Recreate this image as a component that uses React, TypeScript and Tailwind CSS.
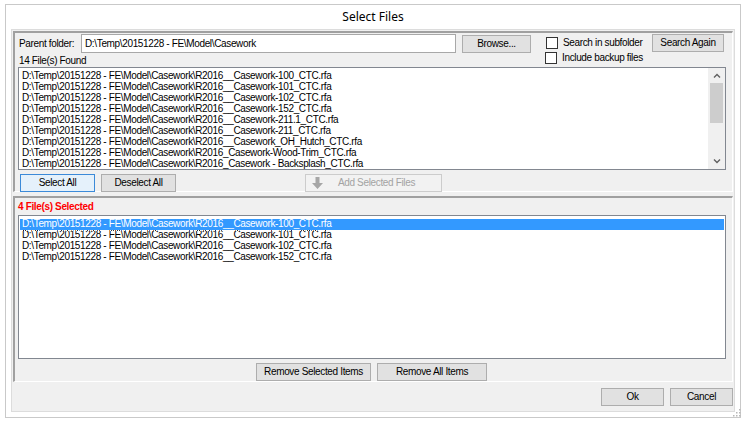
import React from "react";

const BASE = "D:\\Temp\\20151228 - FE\\Model\\Casework\\";

const FOUND = [
  "R2016__Casework-100_CTC.rfa",
  "R2016__Casework-101_CTC.rfa",
  "R2016__Casework-102_CTC.rfa",
  "R2016__Casework-152_CTC.rfa",
  "R2016__Casework-211.1_CTC.rfa",
  "R2016__Casework-211_CTC.rfa",
  "R2016__Casework_OH_Hutch_CTC.rfa",
  "R2016_Casework-Wood-Trim_CTC.rfa",
  "R2016_Casework - Backsplash_CTC.rfa",
].map((f) => BASE + f);

const SELECTED = [
  "R2016__Casework-100_CTC.rfa",
  "R2016__Casework-101_CTC.rfa",
  "R2016__Casework-102_CTC.rfa",
  "R2016__Casework-152_CTC.rfa",
].map((f) => BASE + f);

const FONT = { fontFamily: '"Liberation Sans", Arial, sans-serif' };

// WinForms 8.25pt sans is narrower than Arial at the same height
const TXT = "whitespace-nowrap text-[10px] leading-none tracking-[-0.35px]";

function Btn({
  children, w, primary, disabled,
}: { children: React.ReactNode; w: string; primary?: boolean; disabled?: boolean }) {
  const tone = disabled
    ? "border-[#cccccc] bg-[#f2f2f2] text-[#a3a3a3]"
    : primary
      ? "border-[#3c8ad8] bg-[#e5f1fb] text-black"
      : "border-[#adadad] bg-[#e1e1e1] text-black";
  return (
    <div className={`${w} ${TXT} flex h-[18px] shrink-0 items-center justify-center border ${tone}`}>
      {children}
    </div>
  );
}

function Check({ label }: { label: string }) {
  return (
    <div className={`${TXT} flex h-[14px] items-center gap-[5px] text-black`}>
      <span className="h-[12px] w-[12px] shrink-0 border border-[#333333] bg-white" />
      <span>{label}</span>
    </div>
  );
}

function Chevron({ up }: { up?: boolean }) {
  return (
    <svg width="8" height="5" viewBox="0 0 8 5" className={up ? "" : "rotate-180"}>
      <path d="M1 4.5 L4 1.5 L7 4.5" fill="none" stroke="#606060" strokeWidth="1.4" />
    </svg>
  );
}

export default function App() {
  return (
    <div className="relative h-[425px] w-[746px] overflow-hidden bg-white pl-[5px] pt-[4px]" style={FONT}>
      <div className="flex h-[414px] w-[736px] flex-col border border-[#c9c9c9]">
        {/* title bar */}
        <div
          className="flex h-[24px] shrink-0 items-center justify-center text-[12px] text-black"
          style={{ fontFamily: '"Noto Sans", "Open Sans", sans-serif' }}
        >
          Select Files
        </div>

        {/* client area */}
        <div className="mx-[5px] mb-[5px] flex flex-1 flex-col border border-[#dcdcdc] bg-[#f0f0f0] p-[1px]">
          <div className="flex h-[351px] shrink-0 flex-col">
            {/* upper panel */}
            <div className="flex h-[161px] shrink-0 flex-col border-b border-l-2 border-r border-t-2 border-b-white border-l-[#a0a0a0] border-r-white border-t-[#a0a0a0]">
              <div className="flex h-[34px] shrink-0">
                <div className="flex flex-col pl-[4px] pt-[1px]">
                  <div className="flex h-[19px] items-center">
                    <span className={`${TXT} w-[62px] text-black`}>Parent folder:</span>
                    <div className={`${TXT} flex h-[19px] w-[375px] items-center border border-[#a8a8a8] bg-white px-[3px] text-black`}>
                      D:\Temp\20151228 - FE\Model\Casework
                    </div>
                    <div className="ml-[6px]">
                      <Btn w="w-[69px]">Browse...</Btn>
                    </div>
                  </div>
                  <div className={`${TXT} mt-[3px] text-black`}>14 File(s) Found</div>
                </div>
                <div className="ml-[14px] flex flex-col gap-[1px] pt-[3px]">
                  <div className="pl-[1px]"><Check label="Search in subfolder" /></div>
                  <Check label="Include backup files" />
                </div>
                <div className="ml-auto mr-[8px] pt-[1px]">
                  <Btn w="w-[72px]">Search Again</Btn>
                </div>
              </div>

              {/* found list */}
              <div className="ml-[3px] mr-[6px] flex h-[103px] shrink-0 border border-[#828790] bg-white">
                <div className="flex-1 overflow-hidden pl-[3px] pt-[3px]">
                  {FOUND.map((f) => (
                    <div key={f} className={`${TXT} h-[11px] leading-[11px] text-black`}>{f}</div>
                  ))}
                </div>
                <div className="flex w-[17px] shrink-0 flex-col items-center bg-[#f0f0f0]">
                  <div className="flex h-[15px] items-center justify-center"><Chevron up /></div>
                  <div className="h-[40px] w-[13px] bg-[#cdcdcd]" />
                  <div className="mt-auto flex h-[15px] items-center justify-center"><Chevron /></div>
                </div>
              </div>

              <div className="mt-[4px] flex pl-[5px]">
                <Btn w="w-[75px]" primary>Select All</Btn>
                <div className="ml-[6px]"><Btn w="w-[75px]">Deselect All</Btn></div>
                <div className="ml-[129px]">
                  <Btn w="w-[137px]" disabled>
                    <span className="mr-auto flex w-[20px] justify-center pl-[3px]">
                      <svg width="11" height="12" viewBox="0 0 11 12">
                        <path d="M3.5 0 H7.5 V6 H11 L5.5 12 L0 6 H3.5 Z" fill="#a6a6a6" />
                      </svg>
                    </span>
                    <span className="mr-auto pr-[14px]">Add Selected Files</span>
                  </Btn>
                </div>
              </div>
            </div>

            {/* splitter */}
            <div className="h-[4px] shrink-0" />

            {/* lower panel */}
            <div className="flex flex-1 flex-col border-b border-l-2 border-r border-t-2 border-b-white border-l-[#a0a0a0] border-r-white border-t-[#a0a0a0]">
              <div className={`${TXT} pl-[3px] pt-[4px] font-bold text-[#ff0000]`}>4 File(s) Selected</div>
              <div className="ml-[3px] mr-[6px] mt-[3px] h-[144px] shrink-0 border border-[#828790] bg-white pl-[1px] pr-[1px] pt-[3px]">
                {SELECTED.map((f, i) => (
                  <div
                    key={f}
                    className={`${TXT} h-[11px] pl-[2px] leading-[11px] ${
                      i === 0 ? "bg-[#3399ff] text-white outline-1 outline-dotted outline-[#ffffff]" : "text-black"
                    }`}
                  >
                    {f}
                  </div>
                ))}
              </div>
              <div className="mt-[4px] flex pl-[241px]">
                <Btn w="w-[115px]">Remove Selected Items</Btn>
                <div className="ml-[6px]"><Btn w="w-[110px]">Remove All Items</Btn></div>
              </div>
            </div>
          </div>

          {/* dialog buttons */}
          <div className="flex justify-end gap-[6px] pt-[6px]">
            <Btn w="w-[63px]">Ok</Btn>
            <Btn w="w-[63px]">Cancel</Btn>
          </div>
        </div>
      </div>

      {/* size grip */}
      <svg className="absolute left-[733px] top-[409px]" width="8" height="8" viewBox="0 0 8 8">
        {[
          [6, 0], [6, 3], [3, 3], [6, 6], [3, 6], [0, 6],
        ].map(([x, y]) => (
          <rect key={`${x}-${y}`} x={x} y={y} width="1.5" height="1.5" fill="#b8b8b8" />
        ))}
      </svg>
    </div>
  );
}
